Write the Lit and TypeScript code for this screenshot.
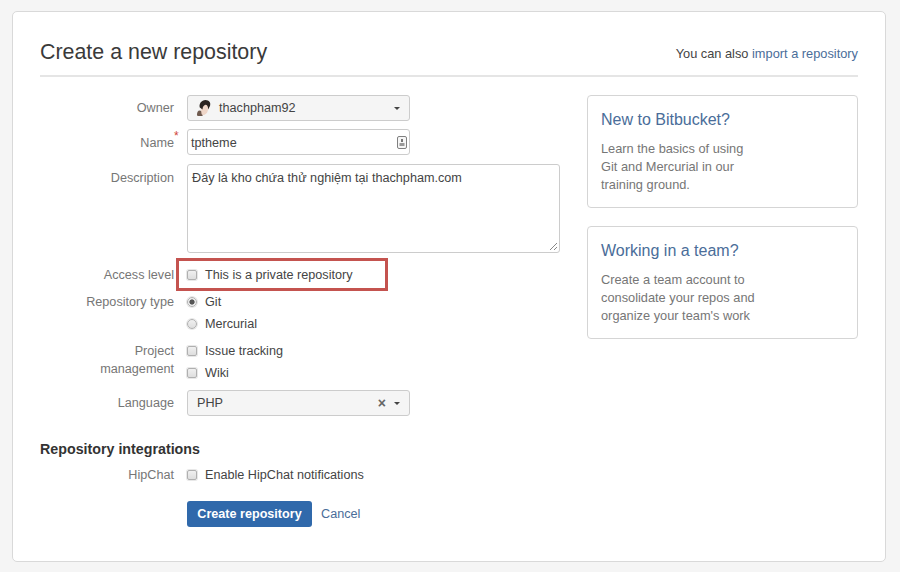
import { LitElement, css, html } from "lit";
import { customElement } from "lit/decorators.js";

@customElement("app-root")
export class AppRoot extends LitElement {
  private _avatar() {
    return html`<svg class="avatar" width="15" height="17" viewBox="0 0 16 18">
      <path d="M1 16c0-3 1-5 3-5l3 1v5H3c-1 0-2 0-2-1z" fill="#6f5a4e" />
      <path d="M5 9c0-4 2-7 6-7 3 0 4 2 3 5l-2 6c-1 2-4 4-6 2z" fill="#efd6c8" />
      <path d="M4 8C3 4 6 0 10 0c4 0 6 3 5 6l-2 4c0-3-1-5-3-5-2 1-3 2-3 5z" fill="#2b2421" />
    </svg>`;
  }

  private _check(label: string) {
    return html`<label class="opt"><span class="box"></span>${label}</label>`;
  }

  protected render() {
    return html`
      <div class="card">
        <header class="head">
          <h1>Create a new repository</h1>
          <div class="also">You can also <a>import a repository</a></div>
        </header>
        <div class="columns">
          <div class="form">
            <div class="row r-owner">
              <div class="lbl">Owner</div>
              <div class="select short">
                ${this._avatar()}<span class="val">thachpham92</span><span class="caret"></span>
              </div>
            </div>
            <div class="row r-name">
              <div class="lbl">Name<sup>*</sup></div>
              <div class="input short">
                <span class="typed">tptheme</span>
                <svg class="key" width="10" height="13" viewBox="0 0 10 13">
                  <rect x=".5" y=".5" width="9" height="12" rx="1.5" fill="#f6f6f6" stroke="#808080" />
                  <rect x="4" y="3" width="2" height="3" fill="#777" />
                  <rect x="2.5" y="7" width="5" height="3" fill="#999" />
                </svg>
              </div>
            </div>
            <div class="row r-desc">
              <div class="lbl">Description</div>
              <div class="area">
                Đây là kho chứa thử nghiệm tại thachpham.com
                <svg class="grip" width="9" height="9" viewBox="0 0 9 9">
                  <path d="M1 8l7-7M5 8l3-3" stroke="#888" fill="none" />
                </svg>
              </div>
            </div>
            <div class="row r-access">
              <div class="lbl">Access level</div>
              <div class="opts">${this._check("This is a private repository")}</div>
              <div class="mark"></div>
            </div>
            <div class="row r-type">
              <div class="lbl">Repository type</div>
              <div class="opts two">
                <label class="opt"><span class="radio on"></span>Git</label>
                <label class="opt"><span class="radio"></span>Mercurial</label>
              </div>
            </div>
            <div class="row r-proj">
              <div class="lbl">Project<br />management</div>
              <div class="opts two">
                ${this._check("Issue tracking")} ${this._check("Wiki")}
              </div>
            </div>
            <div class="row r-lang">
              <div class="lbl">Language</div>
              <div class="select short">
                <span class="val php">PHP</span><span class="clear">×</span><span class="caret"></span>
              </div>
            </div>
            <h2>Repository integrations</h2>
            <div class="row r-hip">
              <div class="lbl">HipChat</div>
              <div class="opts">${this._check("Enable HipChat notifications")}</div>
            </div>
            <div class="actions">
              <button>Create repository</button>
              <a>Cancel</a>
            </div>
          </div>
          <aside class="side">
            <section class="tip">
              <h3>New to Bitbucket?</h3>
              <p>Learn the basics of using<br />Git and Mercurial in our<br />training ground.</p>
            </section>
            <section class="tip">
              <h3>Working in a team?</h3>
              <p>Create a team account to<br />consolidate your repos and<br />organize your team's work</p>
            </section>
          </aside>
        </div>
      </div>
    `;
  }

  static styles = css`
    :host {
      display: block;
      box-sizing: border-box;
      height: 572px;
      padding: 11px 14px 10px 12px;
      background: #f5f5f5;
      font-family: "Liberation Sans", Arial, sans-serif;
      font-size: 12.65px;
      color: #444;
      overflow: hidden;
    }

    .card {
      box-sizing: border-box;
      height: 551px;
      padding: 0 27px;
      background: #fff;
      border: 1px solid #d9d9d9;
      border-radius: 5px;
    }

    .head {
      display: flex;
      align-items: flex-end;
      justify-content: space-between;
      height: 63px;
      border-bottom: 2px solid #e5e5e5;
    }

    h1 {
      margin: 0 0 8px;
      font-size: 21.4px;
      line-height: 30px;
      font-weight: 400;
      color: #3a3a3a;
    }

    .also {
      margin-bottom: 13px;
      font-size: 12.8px;
      line-height: 16px;
    }

    a {
      color: #4a6d99;
    }

    .columns {
      display: flex;
      justify-content: space-between;
      padding-top: 18px;
    }

    .form {
      width: 520px;
    }

    .row {
      position: relative;
      display: flex;
      gap: 13px;
    }

    .lbl {
      flex: none;
      width: 134px;
      text-align: right;
      color: #767676;
      line-height: 18px;
    }

    .lbl sup {
      position: absolute;
      left: 134px;
      top: 1px;
      color: #d04437;
      font-size: 12px;
      line-height: 12px;
    }

    .r-owner .lbl,
    .r-lang .lbl {
      line-height: 26px;
    }

    .r-name .lbl {
      box-sizing: border-box;
      height: 26px;
      padding-top: 2px;
      line-height: 24px;
    }

    .r-desc .lbl {
      padding-top: 5px;
    }

    .select,
    .input,
    .area {
      box-sizing: border-box;
      border: 1px solid #ccc;
      border-radius: 3px;
      color: #444;
    }

    .short {
      width: 223px;
      height: 26px;
      display: flex;
      align-items: center;
    }

    .select {
      background: #f5f5f5;
    }

    .input {
      justify-content: space-between;
      padding: 0 2px 0 3px;
      background: #fff;
    }

    .typed {
      padding-top: 1px;
    }

    .avatar {
      margin-left: 8px;
    }

    .val {
      flex: 1;
      margin-left: 8px;
    }

    .php {
      margin-left: 9px;
    }

    .caret {
      width: 0;
      height: 0;
      margin-right: 9px;
      border-left: 3.5px solid transparent;
      border-right: 3.5px solid transparent;
      border-top: 3.5px solid #444;
    }

    .clear {
      margin-right: 8px;
      font-size: 14px;
      line-height: 13px;
      font-weight: 700;
      color: #666;
    }

    .r-name {
      margin-top: 8px;
    }

    .r-desc {
      margin-top: 9px;
    }

    .area {
      position: relative;
      width: 374px;
      height: 89px;
      padding: 6px 4px;
      line-height: 15px;
      background: #fff;
    }

    .grip {
      position: absolute;
      right: 1px;
      bottom: 1px;
    }

    .r-access {
      margin-top: 13px;
    }

    .r-type {
      margin-top: 9px;
    }

    .r-proj {
      margin-top: 9px;
    }

    .r-lang {
      margin-top: 8px;
    }

    .r-hip {
      margin-top: 8px;
    }

    .opts {
      display: flex;
      flex-direction: column;
      gap: 4px;
    }

    .opt {
      display: flex;
      align-items: center;
      gap: 8px;
      height: 18px;
      color: #444;
    }

    .box,
    .radio {
      box-sizing: border-box;
      flex: none;
      width: 10px;
      height: 10px;
      border: 1px solid #b0b0b0;
      background: linear-gradient(#f0f0f0, #dedede);
      box-shadow: 0 0 0 1px #e8e8e8;
    }

    .box {
      border-radius: 2px;
    }

    .radio {
      border-radius: 50%;
    }

    .radio.on {
      background: radial-gradient(circle, #555 0 2.2px, #eee 3px);
    }

    .mark {
      position: absolute;
      left: 136px;
      top: -8px;
      box-sizing: border-box;
      width: 212px;
      height: 33px;
      border: 3px solid #c4534f;
    }

    h2 {
      margin: 24px 0 0;
      font-size: 14.25px;
      line-height: 18px;
      font-weight: 700;
      color: #333;
    }

    .actions {
      display: flex;
      align-items: center;
      gap: 9px;
      margin-top: 17px;
      margin-left: 147px;
    }

    button {
      height: 26px;
      width: 125px;
      padding: 0;
      border: none;
      border-radius: 3px;
      background: #3069ab;
      color: #fff;
      font: 700 12.6px "Liberation Sans", Arial, sans-serif;
    }

    .side {
      width: 271px;
      display: flex;
      flex-direction: column;
      gap: 18px;
    }

    .tip {
      box-sizing: border-box;
      padding: 14px 13px;
      height: 113px;
      border: 1px solid #d5d5d5;
      border-radius: 4px;
    }

    h3 {
      margin: 0;
      font-size: 16px;
      line-height: 20px;
      font-weight: 400;
      color: #4a6d99;
    }

    p {
      margin: 10px 0 0;
      font-size: 12.8px;
      line-height: 18px;
      color: #767676;
    }
  `;
}
